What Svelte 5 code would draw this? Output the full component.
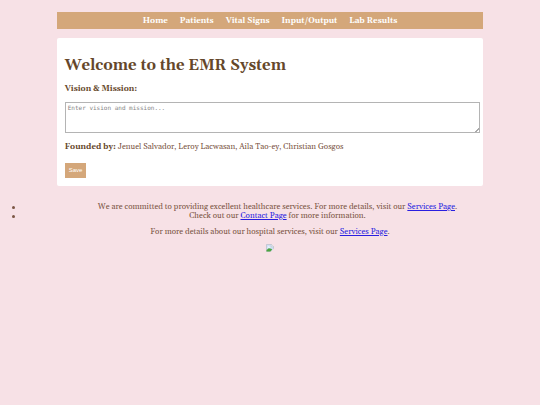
<script>
  const links = ['Home', 'Patients', 'Vital Signs', 'Input/Output', 'Lab Results'];
  let vision = $state('');
</script>

<nav>
  {#each links as link}
    <a href="#top">{link}</a>
  {/each}
</nav>

<main>
  <h1>Welcome to the EMR System</h1>
  <label for="vision">Vision &amp; Mission:</label>
  <textarea id="vision" placeholder="Enter vision and mission..." bind:value={vision}></textarea>
  <p><strong>Founded by:</strong> Jenuel Salvador, Leroy Lacwasan, Aila Tao-ey, Christian Gosgos</p>
  <button type="button">Save</button>
</main>

<footer>
  <ul>
    <li><span>We are committed to providing excellent healthcare services. For more details, visit our <a href="#services">Services Page</a>.</span></li>
    <li><span>Check out our <a href="#contact">Contact Page</a> for more information.</span></li>
  </ul>
  <p>For more details about our hospital services, visit our <a href="#services">Services Page</a>.</p>
  <svg class="broken" viewBox="0 0 16 16" role="img" aria-label="Hospital">
    <path d="M1 1h10l4 4v10H1z" fill="#cfdff5" stroke="#a9b0b8" />
    <path d="M10.500 1v4.500h4.500" fill="#fff" stroke="#a9b0b8" />
    <path d="M3 7a2 2 0 0 1 3.500-1.500 1.500 1.500 0 0 1 2 1.500z" fill="#fff" />
    <path d="M1 15v-3l4.500-3.500 5 1 2 2-4 3.500z" fill="#4da43f" />
    <path d="M9 16l7-7v7z" fill="#f7e1e6" />
  </svg>
</footer>

<style>
  :global(body) {
    background: #f7e1e6;
    color: #7b5544;
    font-family: Gelasio, Georgia, "Liberation Serif", serif;
    font-size: 8px;
    line-height: 9px;
  }

  nav,
  main {
    box-sizing: border-box;
    width: 79%;
    margin: 0 auto;
  }

  nav {
    display: flex;
    justify-content: center;
    gap: 12px;
    margin-top: 12px;
    padding: 5px 4px 3px;
    background: #d4a77a;
  }

  nav a {
    color: #fff;
    font-weight: bold;
    text-decoration: none;
  }

  main {
    display: flex;
    flex-direction: column;
    align-items: flex-start;
    margin-top: 9px;
    padding: 19px 8px 8px;
    border-radius: 2px;
    background: #fff;
  }

  h1 {
    margin: 0 0 10px;
    color: #65472a;
    font-size: 15px;
    line-height: 18px;
  }

  label,
  strong {
    color: #65472a;
    font-weight: bold;
  }

  textarea {
    box-sizing: border-box;
    width: calc(100% + 5px);
    height: 31px;
    margin: 8px 0 10px;
    padding: 1px 2px;
    border: 1px solid #b4b4b4;
    border-radius: 0;
    background: linear-gradient(135deg, #fff 50%, #aaa 50%, #aaa 65%, #fff 65%) right bottom / 4px 4px no-repeat #fff;
    resize: none;
    font-family: "DejaVu Sans Mono", monospace;
    font-size: 6px;
    line-height: 7px;
  }

  textarea::placeholder {
    color: #858585;
  }

  main p {
    margin: 0 0 11px;
  }

  button {
    padding: 4px;
    border: 0;
    background: #d4a77a;
    color: #fff;
    font-family: "Liberation Sans", Arial, sans-serif;
    font-size: 6px;
    line-height: 7px;
  }

  footer {
    margin-top: 17px;
    text-align: center;
  }

  footer a {
    color: #2a1fe0;
  }

  ul {
    margin: 0;
    padding: 0 0 0 12px;
    list-style: none;
  }

  li {
    display: flex;
    align-items: center;
  }

  li::before {
    content: "";
    width: 3px;
    height: 3px;
    border-radius: 50%;
    background: #7b5544;
  }

  li span {
    flex: 1;
  }

  footer p {
    margin: 7px 4px;
  }

  .broken {
    display: block;
    width: 8px;
    height: 8px;
    margin: 0 auto;
  }
</style>
